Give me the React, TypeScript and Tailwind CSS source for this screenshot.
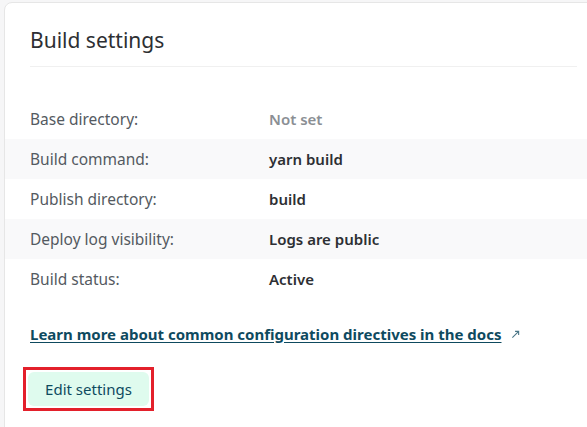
const rows = [
  { label: 'Base directory:', value: 'Not set', muted: true },
  { label: 'Build command:', value: 'yarn build' },
  { label: 'Publish directory:', value: 'build' },
  { label: 'Deploy log visibility:', value: 'Logs are public' },
  { label: 'Build status:', value: 'Active' },
]

export default function App() {
  return (
    <div
      className="min-h-screen overflow-hidden bg-[#f6f6f7] pl-[4px] pt-[2px]"
      style={{ fontFamily: '"Noto Sans", "Open Sans", sans-serif' }}
    >
      <div className="-mr-4 h-[440px] rounded-tl-lg border border-[#e6e6e6] bg-white">
        <div className="mx-[25px] border-b border-[#f0f0f0] pt-[22px] pb-[11px]">
          <h2 className="text-[21px] leading-[30px] text-[#2d2f33]">Build settings</h2>
        </div>

        <div className="mt-[32px]">
          {rows.map((r, i) => (
            <div
              key={r.label}
              className={`flex h-10 items-center px-[25px] ${i % 2 === 1 ? 'bg-[#f9f9fa]' : ''}`}
            >
              <div className="flex items-baseline leading-5">
                <span className="w-[239px] text-[15.5px] text-[#545a61]">{r.label}</span>
                <span
                  className={`text-[15px] font-semibold ${r.muted ? 'text-[#8b8f94]' : 'text-[#2d2f33]'}`}
                >
                  {r.value}
                </span>
              </div>
            </div>
          ))}
        </div>

        <div className="mt-[23px] px-[25px]">
          <a
            href="#"
            className="inline-flex items-center gap-[9px] text-[15px] leading-5 font-bold text-[#0e4a5f]"
          >
            <span className="underline underline-offset-2">
              Learn more about common configuration directives in the docs
            </span>
            <svg width="9" height="9" viewBox="0 0 10 10" className="text-[#4a7687]">
              <path d="M1.5 8.5 L8.5 1.5 M4.5 1.5 H8.5 V5.5" fill="none" stroke="currentColor" strokeWidth="1.2" />
            </svg>
          </a>
        </div>

        <div className="mt-[21px] pl-[18px]">
          <div className="inline-block border-[3px] border-[#e3202b] p-[2px]">
            <button className="block h-[34px] w-[121px] rounded-md bg-[#dffbee] text-[15px] leading-5 text-[#0e4a5f]">
              Edit settings
            </button>
          </div>
        </div>
      </div>
    </div>
  )
}
